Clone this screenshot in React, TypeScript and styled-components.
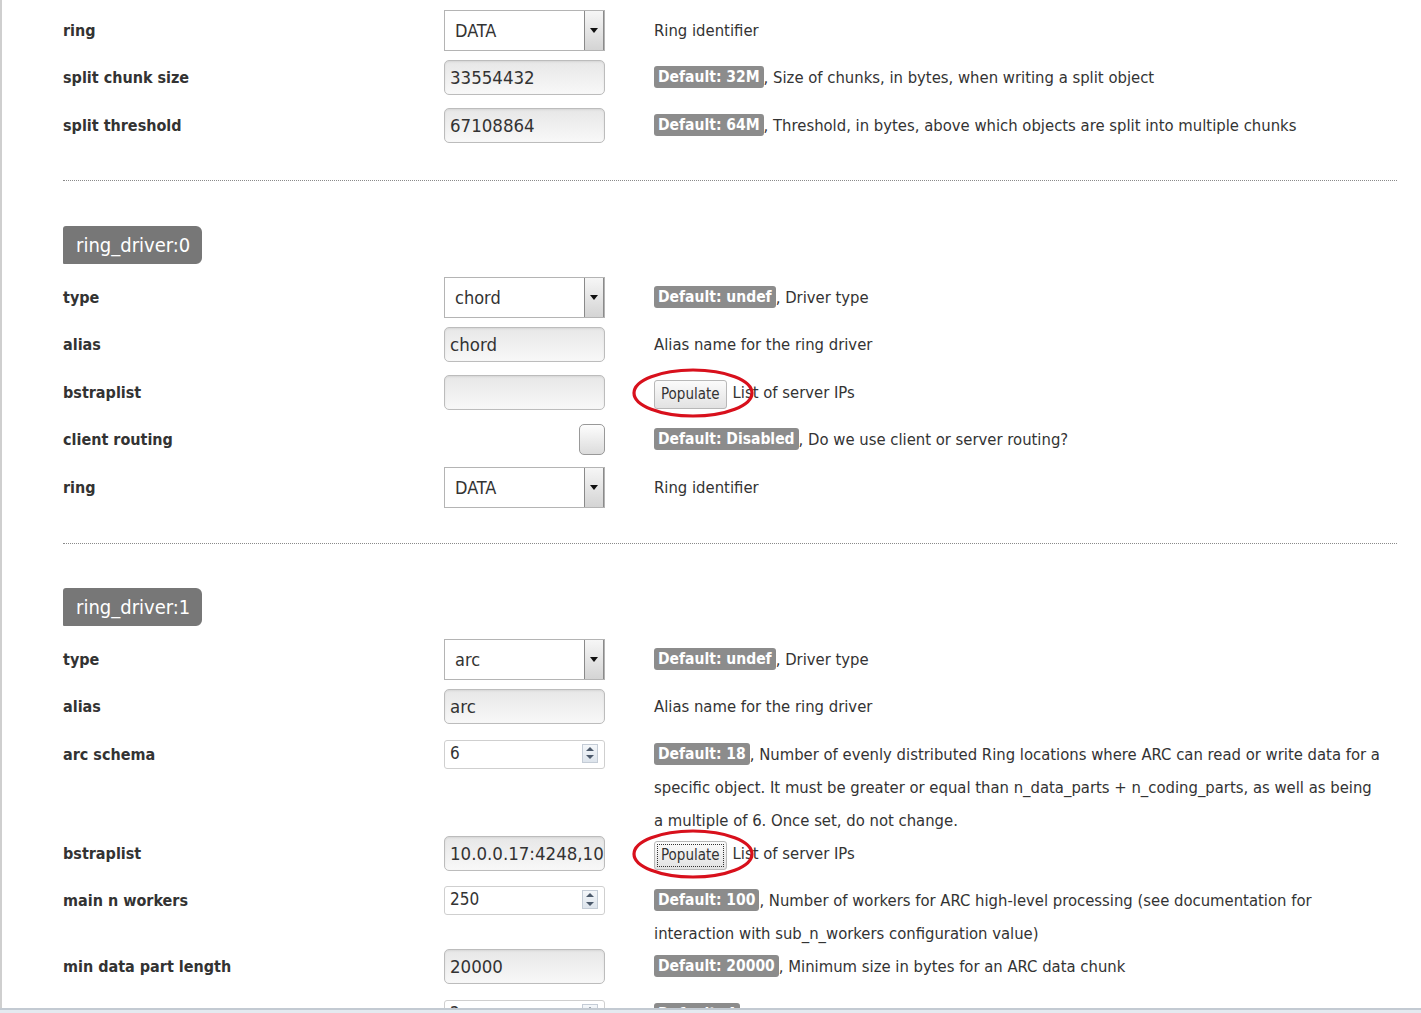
import React from "react";
import styled, { createGlobalStyle } from "styled-components";

const Global = createGlobalStyle`
  html, body { margin: 0; padding: 0; background: #fff; }
  body { font-family: "Liberation Sans Narrow", "DejaVu Sans Condensed", "Liberation Sans", sans-serif; color: #333; }
`;

const NARROW = `"Liberation Sans Narrow", "DejaVu Sans Condensed", "Liberation Sans", sans-serif`;
const LABEL = `"DejaVu Sans Condensed", "DejaVu Sans", sans-serif`;

const Screen = styled.div`
  width: 1421px;
  height: 1013px;
  overflow: hidden;
  display: flex;
  flex-direction: column;
`;

const Viewport = styled.div`
  height: 1008px;
  overflow: hidden;
  border-left: 2px solid #cfcfcf;
  box-sizing: border-box;
`;

const BottomStrip = styled.div`
  flex: 1;
  border-top: 2px solid #c3cad2;
  background: #e4eaf0;
`;

const Content = styled.div`
  padding: 13.5px 24px 0 61px;
`;

const Row = styled.div`
  display: grid;
  grid-template-columns: 381px 161px 1fr;
  min-height: 47.5px;
  align-items: start;
`;

const Label = styled.div`
  font-family: ${LABEL};
  font-weight: bold;
  font-size: 16px;
  line-height: 33px;
  color: #333;
`;

const ControlCell = styled.div<{ $align?: string }>`
  height: 33px;
  display: flex;
  align-items: center;
  justify-content: ${(p) => p.$align || "flex-start"};
`;

const Desc = styled.div`
  margin-left: 49px;
  max-width: 727px;
  font-family: ${NARROW};
  font-size: 16.5px;
  line-height: 33px;
  color: #333;
`;

const Badge = styled.span`
  display: inline-block;
  background: #8c8c8c;
  color: #fff;
  font-weight: bold;
  font-size: 15.5px;
  line-height: 22px;
  padding: 0 4px;
  border-radius: 3px;
  vertical-align: 1px;
`;

const SelectBox = styled.div`
  width: 161px;
  height: 41px;
  box-sizing: border-box;
  border: 1px solid #b4b4b4;
  background: #fff;
  display: flex;
  align-items: center;
  flex-shrink: 0;
`;

const SelectValue = styled.span`
  flex: 1;
  padding-left: 10px;
  font-family: ${NARROW};
  font-size: 18px;
  color: #333;
`;

const SelectArrow = styled.div`
  width: 20px;
  height: 39px;
  box-sizing: border-box;
  border-left: 1px solid #8a8a8a;
  border-right: 1px solid #8a8a8a;
  background: linear-gradient(#f6f6f6, #d4d4d4);
  display: flex;
  align-items: center;
  justify-content: center;
  &::after {
    content: "";
    border-left: 4px solid transparent;
    border-right: 4px solid transparent;
    border-top: 5px solid #111;
  }
`;

const TextInput = styled.div`
  width: 161px;
  height: 35px;
  box-sizing: border-box;
  border: 1px solid #bcbcbc;
  border-radius: 5px;
  background: linear-gradient(#e7e7e7, #f8f8f8);
  box-shadow: inset 0 1px 2px rgba(0, 0, 0, 0.08);
  padding-left: 5px;
  display: flex;
  align-items: center;
  overflow: hidden;
  white-space: nowrap;
  font-family: ${NARROW};
  font-size: 18.5px;
  color: #333;
  flex-shrink: 0;
`;

const NumberInput = styled.div`
  width: 161px;
  height: 29px;
  box-sizing: border-box;
  border: 1px solid #cfcfcf;
  border-radius: 3px;
  background: #fff;
  display: flex;
  align-items: flex-start;
  padding: 1px 6px 0 5px;
  font-family: ${NARROW};
  font-size: 17px;
  line-height: 22px;
  color: #333;
  flex-shrink: 0;
`;

const NumValue = styled.span`
  flex: 1;
`;

const Spinner = styled.div`
  width: 16px;
  height: 19px;
  margin-top: 2px;
  border: 1px solid #c4ccd6;
  background: linear-gradient(#f4f7fa, #dde4ec);
  display: flex;
  flex-direction: column;
  align-items: center;
  justify-content: space-around;
  box-sizing: border-box;
`;

const Tri = styled.span<{ $down?: boolean }>`
  border-left: 4px solid transparent;
  border-right: 4px solid transparent;
  ${(p) => (p.$down ? "border-top: 4px solid #4c5a6c;" : "border-bottom: 4px solid #4c5a6c;")}
`;

const Checkbox = styled.div`
  width: 26px;
  height: 31px;
  box-sizing: border-box;
  border: 1px solid #999;
  border-radius: 5px;
  background: linear-gradient(#fdfdfd, #dcdcdc);
`;

const Separator = styled.hr<{ $top: number }>`
  border: none;
  border-top: 1px dotted #8a8a8a;
  margin: ${(p) => p.$top}px 0 0 0;
  height: 0;
`;

const SectionHeader = styled.div<{ $top: number }>`
  display: inline-block;
  margin-top: ${(p) => p.$top}px;
  margin-bottom: 16.5px;
  height: 38px;
  line-height: 38px;
  padding: 0 12px 0 13px;
  background: #777;
  color: #fff;
  font-family: ${NARROW};
  font-size: 20px;
  border-radius: 3px 6px 6px 1px;
`;

const BtnWrap = styled.span`
  position: relative;
  display: inline-block;
  margin-right: 6px;
  vertical-align: middle;
`;

const Button = styled.span<{ $focus?: boolean }>`
  display: inline-block;
  height: 29px;
  line-height: 27px;
  box-sizing: border-box;
  padding: 0 6px;
  border: 1px solid #b8b8b8;
  border-radius: 3px;
  background: linear-gradient(#fbfbfb, #e2e2e2);
  font-family: ${NARROW};
  font-size: 15px;
  color: #333;
  ${(p) => (p.$focus ? "outline: 1px dotted #333; outline-offset: -4px;" : "")}
`;

const Ring = styled.svg`
  position: absolute;
  left: -22px;
  top: -9px;
  width: 122px;
  height: 50px;
  overflow: visible;
  pointer-events: none;
`;

type Ctrl =
  | { kind: "select"; value: string }
  | { kind: "text"; value: string }
  | { kind: "number"; value: string }
  | { kind: "check" };

type RowDef = {
  label: string;
  ctrl: Ctrl;
  badge?: string;
  desc: string;
  populate?: boolean;
  focus?: boolean;
};

const Control: React.FC<{ c: Ctrl }> = ({ c }) => {
  if (c.kind === "select")
    return (
      <ControlCell>
        <SelectBox>
          <SelectValue>{c.value}</SelectValue>
          <SelectArrow />
        </SelectBox>
      </ControlCell>
    );
  if (c.kind === "text")
    return (
      <ControlCell>
        <TextInput>{c.value}</TextInput>
      </ControlCell>
    );
  if (c.kind === "number")
    return (
      <ControlCell>
        <NumberInput>
          <NumValue>{c.value}</NumValue>
          <Spinner>
            <Tri />
            <Tri $down />
          </Spinner>
        </NumberInput>
      </ControlCell>
    );
  return (
    <ControlCell $align="flex-end">
      <Checkbox />
    </ControlCell>
  );
};

const FieldRow: React.FC<{ r: RowDef }> = ({ r }) => (
  <Row>
    <Label>{r.label}</Label>
    <Control c={r.ctrl} />
    <Desc>
      {r.populate && (
        <BtnWrap>
          <Button $focus={r.focus}>Populate</Button>
          <Ring viewBox="0 0 122 50">
            <ellipse cx="61" cy="25" rx="59" ry="23" fill="none" stroke="#d8101c" strokeWidth="3.2" />
          </Ring>
        </BtnWrap>
      )}
      {r.badge && <Badge>{r.badge}</Badge>}
      {r.badge ? ", " : ""}
      {r.desc}
    </Desc>
  </Row>
);

const top: RowDef[] = [
  { label: "ring", ctrl: { kind: "select", value: "DATA" }, desc: "Ring identifier" },
  { label: "split chunk size", ctrl: { kind: "text", value: "33554432" }, badge: "Default: 32M", desc: "Size of chunks, in bytes, when writing a split object" },
  { label: "split threshold", ctrl: { kind: "text", value: "67108864" }, badge: "Default: 64M", desc: "Threshold, in bytes, above which objects are split into multiple chunks" },
];

const driver0: RowDef[] = [
  { label: "type", ctrl: { kind: "select", value: "chord" }, badge: "Default: undef", desc: "Driver type" },
  { label: "alias", ctrl: { kind: "text", value: "chord" }, desc: "Alias name for the ring driver" },
  { label: "bstraplist", ctrl: { kind: "text", value: "" }, desc: "List of server IPs", populate: true },
  { label: "client routing", ctrl: { kind: "check" }, badge: "Default: Disabled", desc: "Do we use client or server routing?" },
  { label: "ring", ctrl: { kind: "select", value: "DATA" }, desc: "Ring identifier" },
];

const driver1: RowDef[] = [
  { label: "type", ctrl: { kind: "select", value: "arc" }, badge: "Default: undef", desc: "Driver type" },
  { label: "alias", ctrl: { kind: "text", value: "arc" }, desc: "Alias name for the ring driver" },
  {
    label: "arc schema",
    ctrl: { kind: "number", value: "6" },
    badge: "Default: 18",
    desc: "Number of evenly distributed Ring locations where ARC can read or write data for a specific object. It must be greater or equal than n_data_parts + n_coding_parts, as well as being a multiple of 6. Once set, do not change.",
  },
  { label: "bstraplist", ctrl: { kind: "text", value: "10.0.0.17:4248,10.0.0.18:4248" }, desc: "List of server IPs", populate: true, focus: true },
  {
    label: "main n workers",
    ctrl: { kind: "number", value: "250" },
    badge: "Default: 100",
    desc: "Number of workers for ARC high-level processing (see documentation for interaction with sub_n_workers configuration value)",
  },
  { label: "min data part length", ctrl: { kind: "text", value: "20000" }, badge: "Default: 20000", desc: "Minimum size in bytes for an ARC data chunk" },
  { label: "n coding parts", ctrl: { kind: "number", value: "2" }, badge: "Default: 4", desc: "Number of ARC coding chunks (m)" },
];

export default function App() {
  return (
    <Screen>
      <Global />
      <Viewport>
        <Content>
          {top.map((r, i) => (
            <FieldRow key={"a" + i} r={r} />
          ))}
          <Separator $top={24} />
          <SectionHeader $top={45}>ring_driver:0</SectionHeader>
          {driver0.map((r, i) => (
            <FieldRow key={"b" + i} r={r} />
          ))}
          <Separator $top={25} />
          <SectionHeader $top={44}>ring_driver:1</SectionHeader>
          {driver1.map((r, i) => (
            <FieldRow key={"c" + i} r={r} />
          ))}
        </Content>
      </Viewport>
      <BottomStrip />
    </Screen>
  );
}
